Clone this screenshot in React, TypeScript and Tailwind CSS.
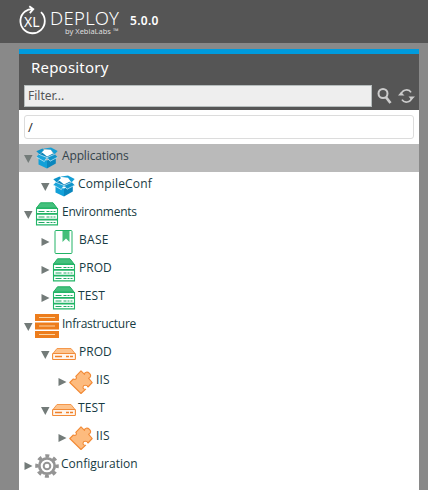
import React from 'react';

type IconKind = 'box' | 'servers' | 'book' | 'rack' | 'drive' | 'puzzle' | 'gear';

interface Node {
  label: string;
  level: 0 | 1 | 2;
  icon: IconKind;
  open: boolean;
  selected?: boolean;
  text: string;
}

const nodes: Node[] = [
  { label: 'Applications', level: 0, icon: 'box', open: true, selected: true, text: 'tracking-[-0.14px]' },
  { label: 'CompileConf', level: 1, icon: 'box', open: true, text: '-ml-px tracking-[0.15px]' },
  { label: 'Environments', level: 0, icon: 'servers', open: true, text: 'tracking-[-0.25px]' },
  { label: 'BASE', level: 1, icon: 'book', open: false, text: 'tracking-[0.3px]' },
  { label: 'PROD', level: 1, icon: 'servers', open: false, text: 'tracking-[0px]' },
  { label: 'TEST', level: 1, icon: 'servers', open: false, text: '-ml-px tracking-[0.1px]' },
  { label: 'Infrastructure', level: 0, icon: 'rack', open: true, text: 'tracking-[-0.25px]' },
  { label: 'PROD', level: 1, icon: 'drive', open: true, text: 'tracking-[0px]' },
  { label: 'IIS', level: 2, icon: 'puzzle', open: false, text: 'tracking-[0.2px]' },
  { label: 'TEST', level: 1, icon: 'drive', open: true, text: '-ml-px tracking-[0.1px]' },
  { label: 'IIS', level: 2, icon: 'puzzle', open: false, text: 'tracking-[0.2px]' },
  { label: 'Configuration', level: 0, icon: 'gear', open: false, text: '-ml-px tracking-[0px]' },
];

const indent = { 0: 'pl-[5px]', 1: 'pl-[22px]', 2: 'pl-[39px]' };

function TreeIcon({ kind }: { kind: IconKind }) {
  if (kind === 'box')
    return (
      <svg className="size-6 shrink-0" viewBox="0 0 24 24">
        <path d="M3.500 9 12 4.500 20.500 9 12 13z" fill="#0a83b8" />
        <path d="M3.500 12 12 14.500V22.500L3.500 18.500z" fill="#12a0d8" />
        <path d="M12 14.500 20.800 11.500V17.500L12 22.500z" fill="#0a86bd" />
        <path d="M6 5.500 9.500 3.800 15.500 3.500 18 7.500 12 10.500z" fill="#fff" />
        <path d="M1.300 5.200 7.500 2.600 9 4 4.800 8.500z" fill="#0d93c9" />
        <path d="M7.800 2.800 16 1.600 22.700 5 19.500 8.500 16 3.800z" fill="#159fd5" />
        <path d="M1.300 11 4 8.300 12 11.500 9.300 15.600z" fill="#1aa4da" />
        <path d="M12 11.500 19.800 8.200 22.700 11.200 15 15.200z" fill="#1094ca" />
        <path d="M4 8.300 12 11.500 19.800 8.200M1.300 11 9.300 15.600 12 11.500 15 15.200 22.700 11.200" fill="none" stroke="#d5eff9" strokeWidth=".7" />
      </svg>
    );
  if (kind === 'servers')
    return (
      <svg className="size-6 shrink-0" viewBox="0 0 24 24">
        <path d="M5.500.8h12.500L22 6H1.500z" fill="#44c17d" stroke="#20ad62" />
        <path d="M1.500 6.500h21v5h-21zm0 5.700h21v5h-21zm0 5.700h21v5h-21z" fill="#fff" stroke="#22b567" strokeWidth="1.100" />
        <path d="M3.500 9.500h6m2 0h3m1 0h2m1 0h2M3.500 15h6m2 0h3m1 0h2m1 0h2M3.500 20.500h6m2 0h3m1 0h2m1 0h2" stroke="#22a966" strokeWidth="1.100" />
      </svg>
    );
  if (kind === 'book')
    return (
      <svg className="size-6 shrink-0" viewBox="0 0 24 24">
        <rect x="3" y=".5" width="17" height="23" rx="1" fill="#fff" stroke="#22b366" />
        <path d="M10.500 1h7v11L14 8.500 10.500 12z" fill="#45bf7a" />
      </svg>
    );
  if (kind === 'rack')
    return (
      <svg className="size-6 shrink-0" viewBox="0 0 24 24">
        <path d="M0 0h24v7H0zM0 8.500h24v7H0zM0 17h24v7H0z" fill="#ed7d1c" />
        <path d="M4 3.500h16M4 12h16M4 20.500h16" stroke="#fbd4a3" strokeWidth="1.200" />
      </svg>
    );
  if (kind === 'drive')
    return (
      <svg className="size-6 shrink-0" viewBox="0 0 24 24">
        <path d="M5 6.500h14l4 5H1z" fill="#fdc38d" stroke="#f5984b" />
        <rect x=".6" y="11.500" width="22.800" height="6" rx=".7" fill="#fff5ec" stroke="#f28b37" strokeWidth="1.100" />
        <path d="M3 14.500h7m4 0h3m1 0h3" stroke="#f08029" strokeWidth="1.300" />
      </svg>
    );
  if (kind === 'puzzle')
    return (
      <svg className="size-6 shrink-0" viewBox="0 0 24 24">
        <path d="M.8 12.500 4.300 9C6.500 10 8.500 8.500 6.800 6.300L12 .8 15.500 4.300C15.500 1.800 18.500 1.500 20.500 3.300 22.500 5.300 21.500 7.800 19.500 8.200L23.200 12.500 19 17C18.200 14.800 14.200 14.600 14 17.200 14 18.800 15 19.400 16.700 19.200L12 23.500z" fill="#fdbb7e" stroke="#f28a36" strokeWidth="1.100" strokeLinejoin="round" />
      </svg>
    );
  return (
    <svg className="size-6 shrink-0" viewBox="0 0 24 24">
      <g fill="none" stroke="#949494">
        <circle cx="12" cy="12" r="10.200" strokeWidth="3.200" strokeDasharray="4 4.011" strokeDashoffset="2" />
        <circle cx="12" cy="12" r="7.700" strokeWidth="2.800" />
        <circle cx="12" cy="12" r="3.300" strokeWidth="2" />
      </g>
    </svg>
  );
}

function Row({ node }: { node: Node }) {
  return (
    <div className={`flex h-7 shrink-0 items-start ${indent[node.level]} ${node.selected ? 'bg-[#bababa]' : ''}`}>
      <svg className="mt-2.5 mr-[2px] h-[10px] w-[9px] shrink-0" viewBox="0 0 9 10">
        <path d={node.open ? 'M0 1h8.500L4.300 9z' : 'M.5 0v8L8.500 4z'} fill="#737b79" />
      </svg>
      <div className="mt-[2px]"><TreeIcon kind={node.icon} /></div>
      <div className="ml-[3px] mt-[4px] flex">
        <span className={`font-['Open_Sans',sans-serif] text-[12px] leading-4 whitespace-nowrap ${node.selected ? 'text-[#34434a]' : 'text-[#173b43]'} ${node.text}`}>
          {node.label}
        </span>
      </div>
    </div>
  );
}

export default function App() {
  return (
    <div className="flex h-[490px] w-[428px] flex-col overflow-hidden bg-[#898989] font-['Noto_Sans',sans-serif]">
      <header className="flex h-[43px] shrink-0 items-start bg-[#555555] pl-[17px] text-white">
        <svg className="mt-[5px] size-[30px] shrink-0" viewBox="0 0 30 30" fill="none" stroke="#fff">
          <path d="M24 7.200A12.200 12.200 0 1 1 8 6.500Q11 4.200 16 4.200M12.300 1.200l4 3-3.500 4" strokeWidth="1.800" />
          <text x="7" y="21.500" fill="#fff" stroke="none" fontSize="13.500" textLength="15.500" lengthAdjust="spacingAndGlyphs">XL</text>
        </svg>
        <div className="ml-[3px] mt-[10px] flex w-[71px] flex-col">
          <span className="text-[18.5px] leading-[16px] font-light tracking-[0.3px]">DEPLOY</span>
          <span className="mt-px w-[71px] pl-[15px] text-[7.5px] leading-[8px] whitespace-nowrap text-[#dddddd]">by XebiaLabs ™</span>
        </div>
        <span className="ml-[9px] mt-[13px] text-[12px] leading-4 font-semibold tracking-[0.3px]">5.0.0</span>
      </header>
      <main className="mt-[6px] ml-[19px] flex w-[400px] grow flex-col bg-white">
        <div className="flex h-[61px] shrink-0 flex-col border-t-[5px] border-[#009bdd] bg-[#555555]">
          <h1 className="ml-[12px] mt-[3px] text-[15px] leading-5 font-normal tracking-[0.2px] text-white">Repository</h1>
          <div className="mt-[8px] ml-[5px] flex">
            <div className="h-[22px] w-[348px] border border-[#b6bdbd] bg-[#eeeeee] pl-[3px] text-[12px] leading-[19px] text-[#555555]">Filter...</div>
            <svg className="mt-[3px] ml-[5px] size-4" viewBox="0 0 16 16" fill="none" stroke="#cccccc">
              <circle cx="6" cy="5.500" r="4.500" strokeWidth="2" />
              <path d="M8.800 9 13.500 15" strokeWidth="2.700" />
            </svg>
            <svg className="mt-[3px] ml-[5px] h-4 w-[17px]" viewBox="0 0 17 16" fill="none" stroke="#cccccc" strokeWidth="1.700">
              <path d="M3 6.500C4.500 1 11 .8 13 4.300M14 9.500C12.500 15 6 15.200 4 11.700" />
              <path d="M0 7.500h6.500L3 4zM10.500 8.500H17l-3.500 3.500z" fill="#ccc" stroke="none" />
            </svg>
          </div>
        </div>
        <div className="mx-[5px] mt-[5px] h-6 shrink-0 rounded-[3px] border border-[#dcdcdc] pl-[3px] text-[13px] leading-[22px] text-[#333333]">/</div>
        <div className="mt-[5px] flex flex-col">
          {nodes.map((node, i) => <Row key={i} node={node} />)}
        </div>
      </main>
    </div>
  );
}
